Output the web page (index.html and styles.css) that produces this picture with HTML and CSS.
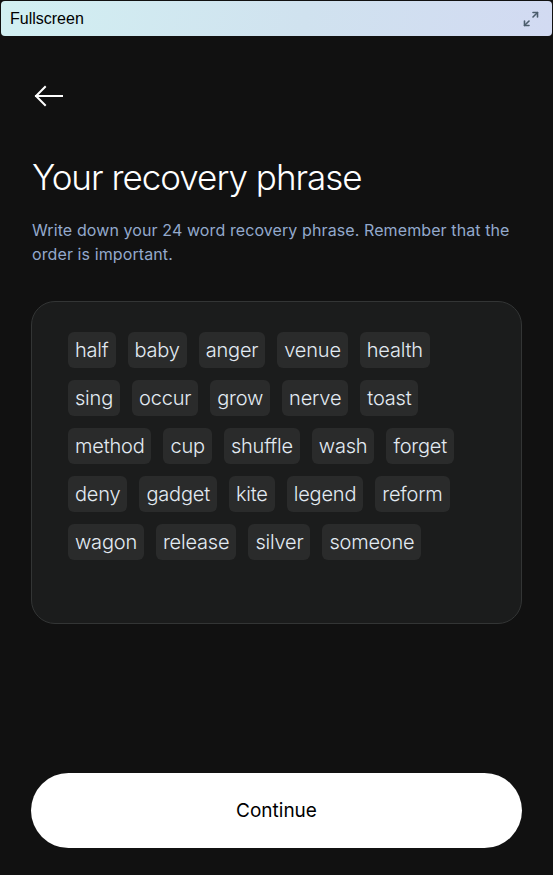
FILE: index.html
```html
<!DOCTYPE html>
<html>
<head>
<meta charset="utf-8">
<link rel="stylesheet" href="styles.css">
</head>
<body>
<div class="page">
  <div class="topbar">
    <span class="topbar-title">Fullscreen</span>
    <svg class="expand" width="18" height="18" viewBox="0 0 18 18" fill="none" stroke="#4b5d6c" stroke-width="1.6" stroke-linecap="round" stroke-linejoin="round">
      <path d="M2.5 15.5 L7 11"/>
      <path d="M2.5 11 V15.5 H7"/>
      <path d="M11 7 L15.5 2.5"/>
      <path d="M11 2.5 H15.5 V7"/>
    </svg>
  </div>
  <main class="content">
    <button class="back" aria-label="Back">
      <svg width="30" height="22" viewBox="0 0 30 22" fill="none" stroke="#ffffff" stroke-width="2" stroke-linecap="square" stroke-linejoin="miter">
        <path d="M2 11 H28"/>
        <path d="M11 2 L2 11 L11 20"/>
      </svg>
    </button>
    <h1 class="title">Your recovery phrase</h1>
    <p class="subtitle">Write down your 24 word recovery phrase. Remember that the order is important.</p>
    <div class="card">
      <div class="words">
        <span class="word">half</span>
        <span class="word">baby</span>
        <span class="word">anger</span>
        <span class="word">venue</span>
        <span class="word">health</span>
        <span class="word">sing</span>
        <span class="word">occur</span>
        <span class="word">grow</span>
        <span class="word">nerve</span>
        <span class="word">toast</span>
        <span class="word">method</span>
        <span class="word">cup</span>
        <span class="word">shuffle</span>
        <span class="word">wash</span>
        <span class="word">forget</span>
        <span class="word">deny</span>
        <span class="word">gadget</span>
        <span class="word">kite</span>
        <span class="word">legend</span>
        <span class="word">reform</span>
        <span class="word">wagon</span>
        <span class="word">release</span>
        <span class="word">silver</span>
        <span class="word">someone</span>
      </div>
    </div>
    <button class="continue">Continue</button>
  </main>
</div>
</body>
</html>
```
FILE: styles.css
```css
* { box-sizing: border-box; }
html, body {
  margin: 0;
  padding: 0;
  background: #111111;
}
body {
  font-family: "Inter", "Liberation Sans", sans-serif;
}
.page {
  min-height: 875px;
  display: flex;
  flex-direction: column;
}
.topbar {
  margin: 1px 1px 0 1px;
  height: 35px;
  border-radius: 4px;
  background: linear-gradient(100deg, #d2f0f2 0%, #d0e2ef 55%, #d2daf2 100%);
  display: flex;
  align-items: center;
  justify-content: space-between;
  padding: 0 12px 0 9px;
}
.topbar-title {
  font-family: "Liberation Sans", sans-serif;
  font-size: 16px;
  color: #000;
}
.expand { display: block; }
.content {
  flex: 1;
  display: flex;
  flex-direction: column;
  padding: 49px 31px 27px 31px;
}
.back {
  align-self: flex-start;
  background: none;
  border: 0;
  padding: 0;
  margin: 0 0 0 3px;
  width: 30px;
  height: 22px;
  cursor: pointer;
}
.back svg { display: block; }
.title {
  margin: 48px 0 0 1px;
  font-size: 35px;
  font-weight: 300;
  color: #ffffff;
  line-height: 44px;
  letter-spacing: -1.0px;
}
.subtitle {
  margin: 19px 0 0 1px;
  font-size: 16px;
  line-height: 24px;
  color: #93a9cc;
  letter-spacing: 0.1px;
}
.card {
  margin-top: 35px;
  height: 323px;
  border: 1px solid #333535;
  border-radius: 24px;
  background: #1b1c1c;
  padding: 30px 36px;
}
.words {
  display: flex;
  flex-wrap: wrap;
  gap: 12px;
}
.word {
  height: 36px;
  line-height: 36px;
  padding: 0 7px;
  border-radius: 6px;
  background: #2a2b2b;
  color: #e2eaf2;
  font-size: 20px;
  font-weight: 300;
  letter-spacing: -0.2px;
}
.continue {
  margin-top: auto;
  height: 75px;
  border: 0;
  border-radius: 38px;
  background: #ffffff;
  color: #000;
  font-family: "Inter", "Liberation Sans", sans-serif;
  font-size: 19px;
  cursor: pointer;
}
```
